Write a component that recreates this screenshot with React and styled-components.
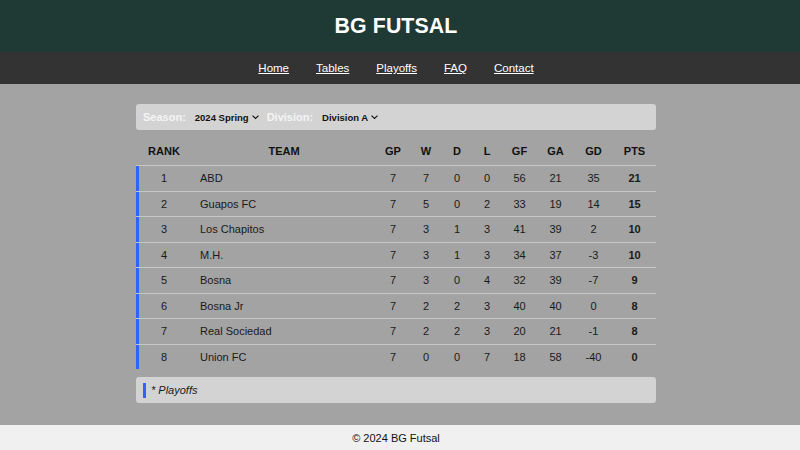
import React from "react";
import styled, { createGlobalStyle } from "styled-components";

const Global = createGlobalStyle`
  html, body { margin: 0; padding: 0; }
  body { font-family: "Liberation Sans", Arial, sans-serif; background: #a3a3a3; }
  * { box-sizing: border-box; }
`;

const Page = styled.div`
  display: flex;
  flex-direction: column;
  height: 100vh;
`;

const Header = styled.header`
  height: 52px;
  background: #1f3a34;
  display: flex;
  align-items: center;
  justify-content: center;
  padding-right: 8px;
`;

const Title = styled.h1`
  margin: 0;
  color: #fff;
  font-size: 21.3px;
  font-weight: 700;
  letter-spacing: 0.1px;
`;

const Nav = styled.nav`
  height: 32px;
  background: #333333;
  display: flex;
  align-items: center;
  justify-content: center;
  gap: 27px;
  padding-right: 8px;
`;

const NavLink = styled.a`
  color: #fff;
  font-size: 11.5px;
  text-decoration: underline;
  cursor: pointer;
`;

const Main = styled.main`
  flex: 1;
  background: #a3a3a3;
  padding: 20px 8px 0 0;
  display: flex;
  justify-content: center;
`;

const Container = styled.div`
  width: 520px;
  display: flex;
  flex-direction: column;
`;

const FilterBar = styled.div`
  height: 26px;
  background: #d3d3d3;
  border-radius: 3px;
  display: flex;
  align-items: center;
  padding: 0 7px;
`;

const FilterLabel = styled.span`
  color: #f4f4f4;
  font-weight: 700;
  font-size: 11px;
  margin-right: 9px;
`;

const Select = styled.span`
  display: inline-flex;
  align-items: center;
  gap: 2px;
  font-size: 9.5px;
  font-weight: 700;
  color: #111;
  margin-right: 7px;
`;

const Table = styled.div`
  margin-top: 10px;
  display: flex;
  flex-direction: column;
`;

const cols = "56px 184px 34px 32px 30px 30px 35px 37px 39px 43px";

const HeadRow = styled.div`
  display: grid;
  grid-template-columns: ${cols};
  height: 25px;
  align-items: start;
  padding-top: 5px;
`;

const HeadCell = styled.div`
  font-size: 11px;
  font-weight: 700;
  color: #111;
  text-align: center;
`;

const Row = styled.div`
  display: grid;
  grid-template-columns: ${cols};
  height: 25.5px;
  align-items: center;
  border-top: 1px solid #c6c6c6;
  box-shadow: inset 3px 0 0 #2f62ff;
`;

const Cell = styled.div`
  font-size: 11px;
  color: #1a1a1a;
  text-align: ${(p) => (p.$left ? "left" : "center")};
  padding-left: ${(p) => (p.$left ? "8px" : "0")};
  font-weight: ${(p) => (p.$bold ? 700 : 400)};
`;

const Legend = styled.div`
  margin-top: 8px;
  height: 26px;
  background: #d3d3d3;
  border-radius: 3px;
  display: flex;
  align-items: center;
  padding-left: 7px;
  gap: 5px;
`;

const LegendMark = styled.span`
  width: 3px;
  height: 15px;
  background: #2f62ff;
`;

const LegendText = styled.span`
  font-size: 11px;
  font-style: italic;
  color: #1a1a1a;
`;

const Footer = styled.footer`
  height: 25px;
  background: #f0f0f0;
  display: flex;
  align-items: center;
  justify-content: center;
  padding-right: 8px;
  font-size: 11px;
  color: #111;
`;

const Chevron = () => (
  <svg width="9" height="8" viewBox="0 0 9 8" fill="none">
    <path d="M1.5 2.6 L4.5 5.4 L7.5 2.6" stroke="#111" strokeWidth="1.1" />
  </svg>
);

const data = [
  [1, "ABD", 7, 7, 0, 0, 56, 21, 35, 21],
  [2, "Guapos FC", 7, 5, 0, 2, 33, 19, 14, 15],
  [3, "Los Chapitos", 7, 3, 1, 3, 41, 39, 2, 10],
  [4, "M.H.", 7, 3, 1, 3, 34, 37, -3, 10],
  [5, "Bosna", 7, 3, 0, 4, 32, 39, -7, 9],
  [6, "Bosna Jr", 7, 2, 2, 3, 40, 40, 0, 8],
  [7, "Real Sociedad", 7, 2, 2, 3, 20, 21, -1, 8],
  [8, "Union FC", 7, 0, 0, 7, 18, 58, -40, 0],
];

const heads = ["RANK", "TEAM", "GP", "W", "D", "L", "GF", "GA", "GD", "PTS"];

export default function App() {
  return (
    <Page>
      <Global />
      <Header>
        <Title>BG FUTSAL</Title>
      </Header>
      <Nav>
        {["Home", "Tables", "Playoffs", "FAQ", "Contact"].map((l) => (
          <NavLink key={l}>{l}</NavLink>
        ))}
      </Nav>
      <Main>
        <Container>
          <FilterBar>
            <FilterLabel>Season:</FilterLabel>
            <Select>
              2024 Spring <Chevron />
            </Select>
            <FilterLabel>Division:</FilterLabel>
            <Select>
              Division A <Chevron />
            </Select>
          </FilterBar>
          <Table>
            <HeadRow>
              {heads.map((h) => (
                <HeadCell key={h}>{h}</HeadCell>
              ))}
            </HeadRow>
            {data.map((r) => (
              <Row key={r[0]}>
                {r.map((v, i) => (
                  <Cell key={i} $left={i === 1} $bold={i === 9}>
                    {v}
                  </Cell>
                ))}
              </Row>
            ))}
          </Table>
          <Legend>
            <LegendMark />
            <LegendText>* Playoffs</LegendText>
          </Legend>
        </Container>
      </Main>
      <Footer>© 2024 BG Futsal</Footer>
    </Page>
  );
}
